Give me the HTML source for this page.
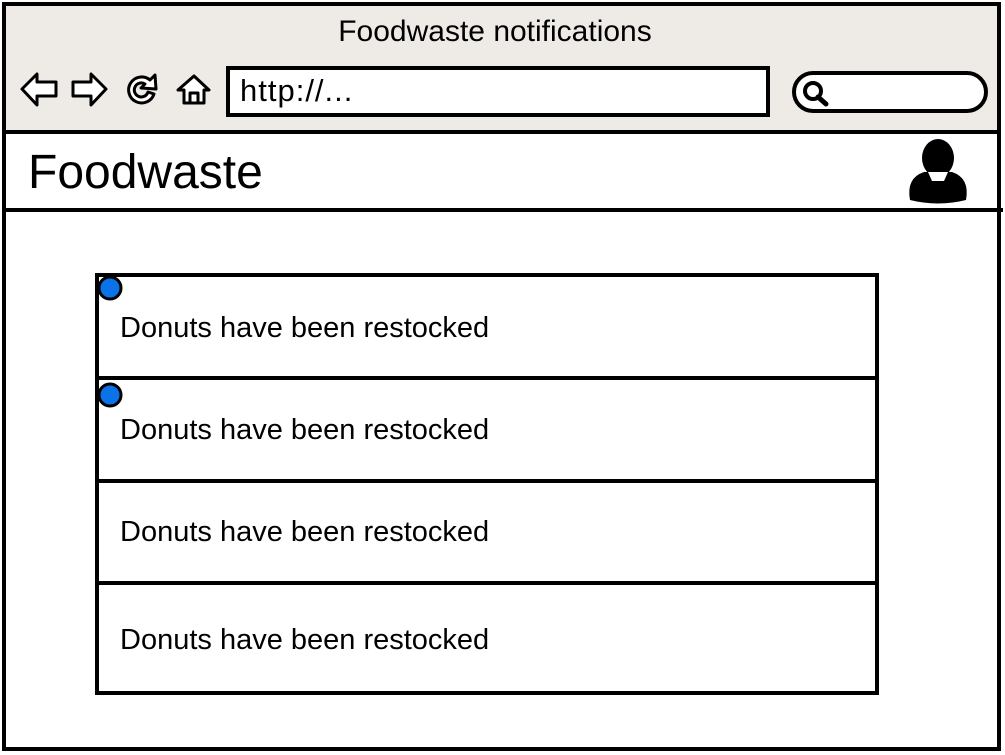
<!DOCTYPE html>
<html><head><style>
body{margin:0;width:1005px;height:755px;background:#fff;overflow:hidden;font-family:"Liberation Sans",sans-serif}
.t{position:absolute;white-space:nowrap;color:#000}
</style></head><body>
<svg width="1005" height="755" style="position:absolute;left:0;top:0">
<rect x="4" y="4" width="995" height="128" fill="#eeebe6"/>
<rect x="4" y="4" width="995" height="745" fill="none" stroke="#000" stroke-width="4"/>
<line x1="4" y1="132" x2="999" y2="132" stroke="#000" stroke-width="4"/>
<line x1="2" y1="210" x2="1003" y2="210" stroke="#000" stroke-width="4"/>
<rect x="228" y="68" width="540" height="47" fill="#fff" stroke="#000" stroke-width="4"/>
<rect x="794" y="73" width="192" height="38" rx="19" fill="#fff" stroke="#000" stroke-width="4"/>
<circle cx="813" cy="91" r="8" fill="none" stroke="#000" stroke-width="4"/>
<line x1="818" y1="97" x2="826" y2="104" stroke="#000" stroke-width="5" stroke-linecap="round"/>
<g fill="#fff" stroke="#000" stroke-width="3" stroke-linejoin="round">
<path d="M22 89 L37 74 L37 82 L56 82 L56 96 L37 96 L37 105 Z"/>
<path d="M106 89 L91 74 L91 82 L73 82 L73 96 L91 96 L91 105 Z"/>
<path d="M150 80 A13 13 0 1 0 154 94 L148 92 A7 7 0 1 1 145 84 L141 88 L156 89 L155 75 Z"/>
<path d="M178 90 L194 76 L209 90 L204 90 L204 103 L184 103 L184 90 Z"/>
<path d="M190 103 L190 93 L198 93 L198 103" fill="none"/>
</g>
<ellipse cx="938" cy="158" rx="16" ry="19" fill="#000"/>
<path d="M910 200 Q906 178 924 172 L952 172 Q970 178 966 200 Q938 207 910 200 Z" fill="#000"/>
<path d="M928 172 L948 172 L944 181 L932 181 Z" fill="#fff"/>
<rect x="97" y="275" width="780" height="418" fill="none" stroke="#000" stroke-width="4"/>
<line x1="97" y1="378" x2="877" y2="378" stroke="#000" stroke-width="4"/>
<line x1="97" y1="481" x2="877" y2="481" stroke="#000" stroke-width="4"/>
<line x1="97" y1="583" x2="877" y2="583" stroke="#000" stroke-width="4"/>
<circle cx="110" cy="288" r="11" fill="#0a73e8" stroke="#000" stroke-width="3"/>
<circle cx="110" cy="395" r="11" fill="#0a73e8" stroke="#000" stroke-width="3"/>
</svg>
<div class="t" style="left:0;width:990px;text-align:center;top:15px;font-size:30px">Foodwaste notifications</div>
<div class="t" style="left:240px;top:73px;font-size:31px;letter-spacing:1px">http://...</div>
<div class="t" style="left:28px;top:145px;font-size:48px">Foodwaste</div>
<div class="t" style="left:120px;top:312px;font-size:29px">Donuts have been restocked</div>
<div class="t" style="left:120px;top:414px;font-size:29px">Donuts have been restocked</div>
<div class="t" style="left:120px;top:516px;font-size:29px">Donuts have been restocked</div>
<div class="t" style="left:120px;top:624px;font-size:29px">Donuts have been restocked</div>
</body></html>
